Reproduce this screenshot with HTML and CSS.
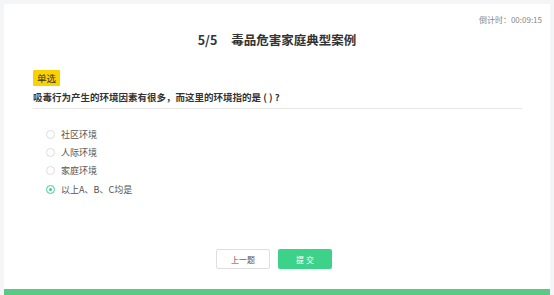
FILE: index.html
```html
<!DOCTYPE html>
<html lang="zh">
<head>
  <meta charset="UTF-8">
  <title>毒品危害家庭典型案例</title>
  <link rel="stylesheet" href="styles.css">
</head>
<body>
  <div class="card">
    <div class="timer">倒计时：00:09:15</div>
    <h1 class="title"><span class="num">5/5</span>毒品危害家庭典型案例</h1>

    <div class="question">
      <span class="tag">单选</span>
      <div class="stem">吸毒行为产生的环境因素有很多，而这里的环境指的是 ( ) ?</div>
    </div>

    <ul class="options">
      <li><span class="radio"></span>社区环境</li>
      <li><span class="radio"></span>人际环境</li>
      <li><span class="radio"></span>家庭环境</li>
      <li class="checked"><span class="radio"></span>以上A、B、C均是</li>
    </ul>

    <div class="actions">
      <button class="btn prev">上一题</button>
      <button class="btn submit">提 交</button>
    </div>

    <div class="bottom-bar"></div>
  </div>
</body>
</html>
```

FILE: styles.css
```css
html, body {
  margin: 0;
  padding: 0;
}
body {
  font-family: "Noto Sans CJK SC", "Noto Sans", sans-serif;
  background: #f4f5f6;
  padding: 4px 4px 0 4px;
  height: 295px;
  box-sizing: border-box;
}
.card {
  background: #fff;
  height: 291px;
  display: flex;
  flex-direction: column;
}
.timer {
  text-align: right;
  font-size: 8px;
  color: #888;
  padding: 10px 8px 0 0;
  line-height: 12px;
}
.title {
  margin: 4px 0 0 0;
  text-align: center;
  font-size: 12.5px;
  font-weight: bold;
  color: #333;
  line-height: 20px;
}
.title .num {
  margin-right: 14px;
}
.question {
  display: flex;
  flex-direction: column;
  align-items: flex-start;
  margin: 20px 28px 0 29px;
  border-bottom: 1px solid #e6e6e6;
  padding-bottom: 3px;
}
.tag {
  background: #f9d200;
  color: #333;
  font-size: 9.5px;
  line-height: 16px;
  padding: 0 4px;
  border-radius: 1px;
}
.stem {
  margin-top: 3px;
  font-size: 9.5px;
  font-weight: bold;
  color: #333;
  line-height: 16px;
}
.options {
  list-style: none;
  margin: 16px 0 0 42px;
  padding: 0;
}
.options li {
  display: flex;
  align-items: center;
  font-size: 9px;
  color: #555;
  height: 18.3px;
}
.radio {
  width: 7px;
  height: 7px;
  border: 1px solid #dcdcdc;
  border-radius: 50%;
  margin-right: 6px;
  box-sizing: content-box;
  position: relative;
}
.checked .radio {
  border-color: #3fcf88;
}
.checked .radio::after {
  content: "";
  position: absolute;
  left: 2px;
  top: 2px;
  width: 3px;
  height: 3px;
  border-radius: 50%;
  background: #3fcf88;
}
.actions {
  margin-top: auto;
  display: flex;
  justify-content: center;
  gap: 8px;
  padding: 0 6px 20px 0;
}
.btn {
  width: 54px;
  height: 20px;
  font-family: inherit;
  font-size: 8px;
  border-radius: 2px;
  padding: 0;
  cursor: pointer;
}
.prev {
  background: #fff;
  border: 1px solid #dedede;
  color: #555;
}
.submit {
  background: #3dd28a;
  border: none;
  color: #fff;
}
.bottom-bar {
  height: 6px;
  background: #5ac986;
}
```
